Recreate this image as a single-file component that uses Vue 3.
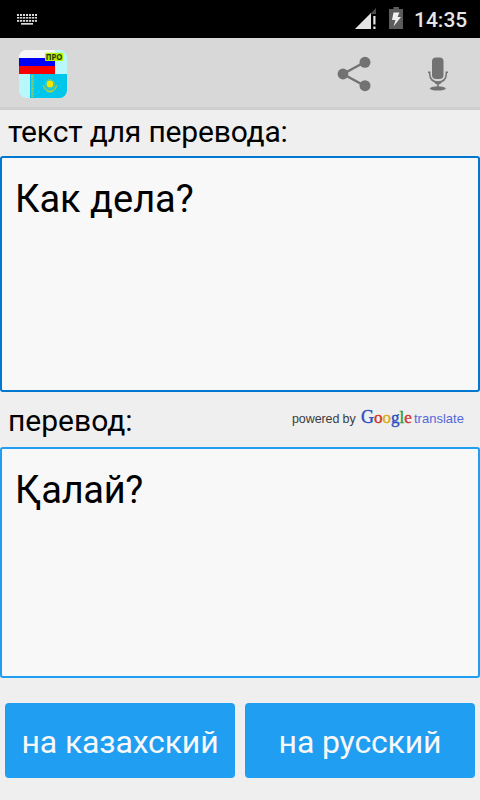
<script setup>
import { ref } from "vue";

const source = ref("Как дела?");
const result = ref("Қалай?");

// x positions of the small key dots, per row
const keys = [17, 20, 23, 26, 29, 32, 35];
</script>

<template>
  <div class="screen">
    <header class="status">
      <svg class="keyboard" width="20" height="11" viewBox="17 14 20 11">
        <g fill="#d8d8d8">
          <rect v-for="x in keys" :key="'a' + x" :x="x" y="14" width="2" height="2" />
          <rect v-for="x in keys" :key="'b' + x" :x="x" y="17" width="2.3" height="1.6" />
          <rect v-for="x in keys" :key="'c' + x" :x="x" y="20" width="2.2" height="1.8" />
          <rect x="21" y="23" width="12" height="1.7" />
        </g>
      </svg>
      <svg class="signal" width="22" height="22" viewBox="355 8 22 22">
        <path d="M355 29 L376 8 V14 H371 V29 Z" fill="#4a4a4a" />
        <path d="M355 29 L371 13 V29 Z" fill="#e4e4e4" />
        <path d="M373.300 16 h2.200 v8.500 h-2.200 z M373.300 26.500 h2.200 v2.500 h-2.200 z" fill="#e4e4e4" />
      </svg>
      <svg class="battery" width="14" height="22" viewBox="389 7 14 22">
        <path d="M393.500 7 H399 V9 H403 V29 H389 V9 H393.500 Z" fill="#5c5c5c" />
        <path d="M393.500 12.500 H399.500 L397.500 17 H401 L393.500 26.500 L395.500 20 H392 Z" fill="#f0f0f0" />
      </svg>
      <span class="clock">14:35</span>
    </header>

    <nav class="bar">
      <svg class="logo" width="48" height="48" viewBox="0 0 48 48">
        <defs>
          <clipPath id="tile"><rect width="48" height="48" rx="7.500" /></clipPath>
        </defs>
        <g clip-path="url(#tile)">
          <rect width="48" height="48" fill="#b9f8fa" />
          <rect width="36" height="8" fill="#f7f7f7" />
          <rect y="8" width="36" height="8" fill="#0000fa" />
          <rect y="16" width="36" height="8" fill="#fa0000" />
          <rect x="11" y="24" width="37" height="24" fill="#00c6ec" />
          <path d="M13.500 25 V47" stroke="#8fc962" stroke-width="2.600" stroke-dasharray="2 .6" />
          <circle cx="31" cy="34" r="4.500" fill="none" stroke="#7dcc7c" stroke-width="1.200" stroke-dasharray="1 .7" />
          <circle cx="31" cy="34" r="3.400" fill="#f7e600" />
          <path d="M24.300 35 Q25.500 41 31 41 Q36.500 41 37.700 35" fill="none" stroke="#8bc867" stroke-width="1.700" />
          <path d="M28 41 Q31 43 34 41" fill="none" stroke="#b5d63c" stroke-width="1.300" />
        </g>
        <rect x="26" y="2.700" width="18" height="8.300" rx="1" fill="#b2ef00" />
        <text x="26.700" y="9.900" textLength="16.600" lengthAdjust="spacingAndGlyphs" class="pro">ПРО</text>
      </svg>

      <svg class="share" width="34" height="36" viewBox="337 56 34 36">
        <path d="M365 62 L343 74 L365 86" fill="none" stroke="#727272" stroke-width="2.400" />
        <g fill="#727272">
          <circle cx="343" cy="74" r="5.400" />
          <circle cx="365" cy="62.300" r="5.500" />
          <circle cx="365" cy="85.700" r="5.500" />
        </g>
      </svg>

      <svg class="mic" width="20" height="34" viewBox="428 57 20 34">
        <rect x="432" y="57.500" width="11.500" height="21.500" rx="4" fill="#727272" />
        <path d="M428 72.300 H429.700 V74 Q430 82 438 82 Q446 82 446.300 74 V72.300 H448" fill="none" stroke="#727272" stroke-width="1.500" />
        <path d="M434 82 H442 Q440 84.500 438.700 84.500 V87 H437.200 V84.500 Q436 84.500 434 82 Z" fill="#727272" />
        <ellipse cx="437.800" cy="88.400" rx="8" ry="2.100" fill="#727272" />
      </svg>
    </nav>

    <div class="label first">текст для перевода:</div>
    <textarea v-model="source" class="field source" spellcheck="false"></textarea>

    <div class="label second">
      <span>перевод:</span>
      <div class="powered">
        <span class="by">powered by</span>
        <span class="google"><b class="blue big">G</b><b class="red">o</b><b class="yellow">o</b><b class="blue">g</b><b class="green">l</b><b class="red">e</b></span>
        <span class="translate">translate</span>
      </div>
    </div>
    <textarea v-model="result" class="field result" spellcheck="false"></textarea>

    <div class="buttons">
      <button type="button">на казахский</button>
      <button type="button">на русский</button>
    </div>
  </div>
</template>

<style>
body {
  margin: 0;
  background: #efefef;
}
</style>

<style scoped>
.screen {
  width: 480px;
  height: 800px;
  display: flex;
  flex-direction: column;
  overflow: hidden;
  background: #efefef;
  color: #000;
  font-family: Roboto, "Noto Sans", sans-serif;
}

.screen > * {
  box-sizing: border-box;
  flex-shrink: 0;
}

.status {
  height: 38px;
  display: flex;
  align-items: flex-start;
  background: #000;
}

.keyboard {
  margin: 14px 0 0 17px;
}

.signal {
  margin: 8px 0 0 auto;
}

.battery {
  margin: 7px 0 0 12px;
}

.clock {
  width: 77px;
  padding-left: 11px;
  box-sizing: border-box;
  color: #e6e6e6;
  font-size: 21px;
  font-weight: 500;
  line-height: 40px;
}

.bar {
  height: 72px;
  padding: 0 32px 0 19px;
  display: flex;
  align-items: center;
  background: #d8d8d8;
  border-bottom: 3px solid #cfcfcf;
}

.logo {
  margin-top: 3px;
}

.pro {
  font: bold 8.5px "Open Sans", sans-serif;
  fill: #26350a;
}

.share {
  margin: 3px 57px 0 auto;
}

.mic {
  margin-top: 3px;
}

.label {
  padding: 0 16px 0 8px;
  display: flex;
  justify-content: space-between;
  font-size: 30px;
}

.first {
  height: 46px;
  line-height: 44px;
  letter-spacing: -0.17px;
}

.second {
  height: 55px;
  line-height: 58px;
}

.powered {
  height: 28px;
  width: 172px;
  margin-top: 11px;
  display: flex;
  align-items: baseline;
  font-family: "Liberation Sans", sans-serif;
  font-size: 12.5px;
  line-height: 28px;
  white-space: nowrap;
}

.by {
  width: 69px;
  color: #3c3c3c;
  letter-spacing: -0.1px;
}

.google {
  width: 53px;
  font-family: "Liberation Serif", serif;
  font-size: 17px;
}

.google b {
  font-weight: normal;
  -webkit-text-stroke: 0.4px currentColor;
}

.google .big {
  font-size: 18px;
}

.blue {
  color: #2b50c0;
}

.red {
  color: #cf3527;
}

.yellow {
  color: #d9ae12;
}

.green {
  color: #2f9d39;
}

.translate {
  color: #5468d8;
  font-size: 13px;
}

.field {
  display: block;
  width: 480px;
  margin: 0;
  padding: 18px 13px 0;
  border: 2px solid #1f9ff1;
  border-radius: 3px;
  outline: none;
  resize: none;
  background: #f8f8f8;
  color: #000;
  font-family: inherit;
  font-size: 38px;
  line-height: 46px;
}

.source {
  height: 236px;
  border-color: #0078d0;
}

.result {
  height: 231px;
  letter-spacing: -0.3px;
}

.buttons {
  padding: 25px 5px 0;
  display: flex;
  gap: 10px;
}

.buttons button {
  flex: 1;
  height: 75px;
  padding: 3px 0 0;
  border: 0;
  border-radius: 4px;
  background: #209ff2;
  color: #f8f8f8;
  font-family: inherit;
  font-size: 32px;
  letter-spacing: -0.15px;
}
</style>
